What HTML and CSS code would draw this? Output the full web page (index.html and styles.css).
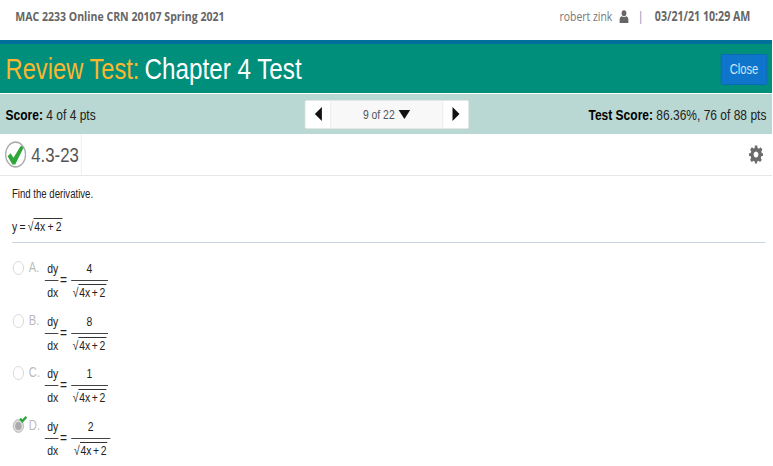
FILE: index.html
```html
<!DOCTYPE html>
<html lang="en">
<head>
<meta charset="utf-8">
<title>Review Test</title>
<link rel="stylesheet" href="styles.css">
</head>
<body>
<div class="viewport">
<div class="page">
  <header class="top">
    <div class="course">MAC 2233 Online CRN 20107 Spring 2021</div>
    <div class="user">
      <span class="name">robert zink</span>
      <svg class="user-icon" viewBox="0 0 12 14"><circle cx="6" cy="3.6" r="3.2"/><path d="M0 14V10.500C0 8 1.600 6.800 3.400 6.600 4.200 7.200 5 7.500 6 7.500S7.800 7.200 8.600 6.600C10.400 6.800 12 8 12 10.500V14Z"/></svg>
      <span class="sep">|</span>
      <span class="date">03/21/21 10:29 AM</span>
    </div>
  </header>
  <section class="title-bar">
    <h1 class="title"><span class="title-lead">Review Test:</span> Chapter 4 Test</h1>
    <button class="close">Close</button>
  </section>
  <section class="score-bar">
    <div class="score"><b>Score:</b> 4 of 4 pts</div>
    <div class="pager">
      <span class="pager-btn"><svg class="arrow" viewBox="0 0 10 16"><path d="M10 0V16L0 8Z"/></svg></span>
      <span class="pager-mid">9 of 22 <svg class="caret" viewBox="0 0 16 10"><path d="M0 0H16L8 10Z"/></svg></span>
      <span class="pager-btn"><svg class="arrow" viewBox="0 0 10 16"><path d="M0 0V16L10 8Z"/></svg></span>
    </div>
    <div class="score"><b>Test Score:</b> 86.36%, 76 of 88 pts</div>
  </section>
  <section class="q-head">
    <div class="q-id">
      <svg class="q-check" viewBox="0 0 30 30"><circle cx="15" cy="15" r="13.800" fill="#fff" stroke="#adadad" stroke-width="1.800"/><path d="M4 17 8 13.500 12 18.500 22.500 5 26 7.500 14.500 26H10.500Z" fill="#2fa63a"/></svg>
      <span class="q-num">4.3-23</span>
    </div>
    <svg class="gear" viewBox="0 0 24 24"><path fill-rule="evenodd" d="M10 0H14L14.700 3.300 16.800 4.200 19.700 2.400 22.600 5.300 20.800 8.200 21.700 10.300 24 10.500V13.500L20.800 14.300 19.900 16.400 21.600 19.300 18.800 22.100 15.900 20.400 14 21.200 13.700 24H10.300L9.800 21.200 7.900 20.400 5 22.100 2.200 19.300 3.900 16.400 3.100 14.300 0 13.500V10.500L3.200 10.100 4 8.100 2.300 5.300 5.200 2.400 8.100 4.100 9.900 3.300ZM12 8A4 4 0 1 0 12.010 8Z"/></svg>
  </section>
  <main class="content">
    <p class="prompt">Find the derivative.</p>
    <p class="equation">y = <span class="rad">√<span class="radicand">4x + 2</span></span></p>
    <ol class="options">
      <li class="option">
        <span class="radio-wrap"><span class="radio"></span></span><span class="letter">A.</span>
        <span class="frac"><span class="num">dy</span><span class="den">dx</span></span><span class="eq">=</span>
        <span class="frac wide"><span class="num">4</span><span class="den"><span class="rad">√<span class="radicand">4x + 2</span></span></span></span>
      </li>
      <li class="option">
        <span class="radio-wrap"><span class="radio"></span></span><span class="letter">B.</span>
        <span class="frac"><span class="num">dy</span><span class="den">dx</span></span><span class="eq">=</span>
        <span class="frac wide"><span class="num">8</span><span class="den"><span class="rad">√<span class="radicand">4x + 2</span></span></span></span>
      </li>
      <li class="option">
        <span class="radio-wrap"><span class="radio"></span></span><span class="letter">C.</span>
        <span class="frac"><span class="num">dy</span><span class="den">dx</span></span><span class="eq">=</span>
        <span class="frac wide"><span class="num">1</span><span class="den"><span class="rad">√<span class="radicand">4x + 2</span></span></span></span>
      </li>
      <li class="option">
        <span class="radio-wrap"><span class="radio chosen"></span><svg class="tick" viewBox="0 0 14 10"><path d="M0 5 3 2.500 5.500 5 11 0 14 2.500 5.500 10Z"/></svg></span><span class="letter">D.</span>
        <span class="frac"><span class="num">dy</span><span class="den">dx</span></span><span class="eq">=</span>
        <span class="frac wider"><span class="num">2</span><span class="den"><span class="rad">√<span class="radicand">4x + 2</span></span></span></span>
      </li>
    </ol>
  </main>
</div>
</div>
</body>
</html>
```
FILE: styles.css
```css
html, body {
  margin: 0;
  padding: 0;
  background: #fff;
}
.viewport {
  width: 772px;
  height: 466px;
  overflow: hidden;
}
.page {
  width: 965px;
  height: 466px;
  transform: scaleX(0.8);
  transform-origin: left top;
  font-family: "Liberation Sans", Arial, sans-serif;
  color: #222;
}
.top {
  height: 40px;
  display: flex;
  justify-content: space-between;
  align-items: center;
  padding: 0 27px 8px 19px;
  box-sizing: border-box;
  font-family: "Open Sans", sans-serif;
  font-size: 13.200px;
  color: #666;
}
.course, .date { font-weight: 700; }
.date { font-size: 13.300px; }
.user { display: flex; align-items: center; }
.name { font-size: 13px; color: #777; }
.user-icon { width: 12px; height: 13px; margin-left: 9px; fill: #666; }
.sep { margin: 0 14px 0 11px; color: #5f8fb0; }
.title-bar {
  height: 53px;
  box-sizing: border-box;
  border-top: 4px solid #00709a;
  background: #008f7a;
  display: flex;
  justify-content: space-between;
  align-items: center;
  padding: 0 6px 0 7px;
}
.title {
  margin: 0;
  font-size: 30.300px;
  font-weight: 400;
  color: #fff;
}
.title-lead { font-size: 29.600px; margin-right: -2px; color: #fbb62f; }
.close {
  width: 58px;
  height: 31px;
  margin-top: 1px;
  border: 1px solid #0d68b5;
  border-radius: 2px;
  background: #0f75cc;
  color: #cfe3f5;
  font: 14px "Liberation Sans", Arial, sans-serif;
  padding: 0;
}
.score-bar {
  height: 41px;
  border-top: 1px solid #fff;
  box-sizing: border-box;
  background: #bad8d3;
  display: grid;
  grid-template-columns: 1fr auto 1fr;
  align-items: center;
  padding: 0 7px;
  font-size: 15px;
  color: #222;
}
.score b { color: #000; }
.score:last-child { text-align: right; }
.pager {
  display: flex;
  height: 29px;
  width: 205px;
  margin-left: 2px;
  background: #f8f8f8;
  border: 1px solid #e6e6e6;
  border-radius: 2px;
  box-sizing: border-box;
}
.pager-btn {
  width: 31px;
  background: #fff;
  display: flex;
  align-items: center;
  justify-content: center;
}
.pager-btn:first-child { border-right: 1px solid #e6e6e6; }
.pager-btn:last-child { border-left: 1px solid #e6e6e6; }
.pager-mid {
  flex: 1;
  display: flex;
  align-items: center;
  justify-content: center;
  font-size: 13px;
  color: #555;
  gap: 5px;
}
.arrow { width: 10px; height: 14px; fill: #111; }
.caret { width: 15px; height: 9px; fill: #111; }
.q-head {
  height: 42px;
  box-sizing: border-box;
  border-bottom: 1px solid #e3e7ea;
  display: flex;
  justify-content: space-between;
  align-items: center;
  padding-right: 11px;
}
.q-id {
  height: 41px;
  width: 102px;
  box-sizing: border-box;
  border-right: 1px solid #e8ecee;
  display: flex;
  align-items: center;
  padding-left: 6px;
  gap: 6px;
}
.q-check { width: 27px; height: 29px; flex: none; }
.q-num { font-size: 21px; color: #555; }
.gear { width: 18px; height: 19px; fill: #6b6b6b; }
.content { padding: 0 8px 0 10px; }
.prompt {
  margin: 11px 0 0 5px;
  font-size: 12px;
  line-height: 14px;
  color: #222;
}
.equation {
  margin: 17px 0 0 5px;
  padding-bottom: 6px;
  font-size: 13px;
  line-height: 18px;
  word-spacing: -0.800px;
  color: #222;
  border-bottom: 1px solid #c7d3df;
}
.rad { white-space: nowrap; }
.radicand { border-top: 1px solid #333; padding: 0 1px; }
.options { list-style: none; margin: 17px 0 0 6px; padding: 0; }
.option {
  display: flex;
  align-items: flex-start;
  height: 52.600px;
  font-size: 13px;
  color: #222;
}
.radio-wrap { position: relative; width: 20px; height: 14px; flex: none; margin-top: 1px; }
.radio {
  display: block;
  width: 12px;
  height: 12px;
  border: 1px solid #d4d4d4;
  border-radius: 50%;
  background: #fff;
}
.radio.chosen { background: #aaa; box-shadow: inset 0 0 0 2px #ddd; border-color: #c4c4c4; }
.tick { position: absolute; left: 8px; top: -4px; width: 10px; height: 9px; fill: #2fa63a; }
.letter { width: 20px; flex: none; margin-top: -1px; color: #bbb; font-size: 14px; }
.frac {
  display: inline-flex;
  flex-direction: column;
  align-items: center;
  width: 17px;
  text-indent: 3px;
}
.wide { width: 46px; text-indent: 0; }
.wider { width: 49px; text-indent: 0; }
.num {
  width: 100%;
  text-align: center;
  line-height: 18px;
  padding-bottom: 2px;
  border-bottom: 1px solid #444;
}
.den { line-height: 17px; padding-top: 3px; white-space: nowrap; word-spacing: -1.700px; }
.eq { margin: 13px 5px 0 2px; font-size: 15px; line-height: 14px; }
```
